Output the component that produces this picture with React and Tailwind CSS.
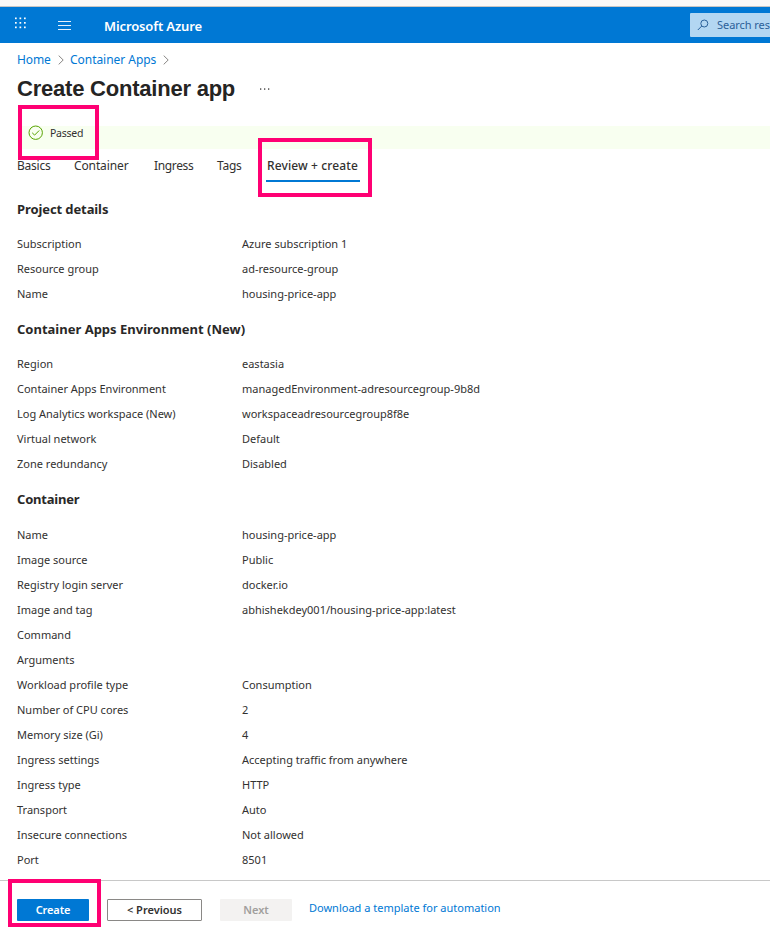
import React from "react";

const project = [
  ["Subscription", "Azure subscription 1"],
  ["Resource group", "ad-resource-group"],
  ["Name", "housing-price-app"],
];
const environment = [
  ["Region", "eastasia"],
  ["Container Apps Environment", "managedEnvironment-adresourcegroup-9b8d"],
  ["Log Analytics workspace (New)", "workspaceadresourcegroup8f8e"],
  ["Virtual network", "Default"],
  ["Zone redundancy", "Disabled"],
];
const container = [
  ["Name", "housing-price-app"],
  ["Image source", "Public"],
  ["Registry login server", "docker.io"],
  ["Image and tag", "abhishekdey001/housing-price-app:latest"],
  ["Command", ""],
  ["Arguments", ""],
  ["Workload profile type", "Consumption"],
  ["Number of CPU cores", "2"],
  ["Memory size (Gi)", "4"],
  ["Ingress settings", "Accepting traffic from anywhere"],
  ["Ingress type", "HTTP"],
  ["Transport", "Auto"],
  ["Insecure connections", "Not allowed"],
  ["Port", "8501"],
];

function Section({ title, rows, className, listClassName }) {
  return (
    <section className={className}>
      <h2 className="h-[22px] text-[13px] leading-[22px] font-bold text-[#292827]">{title}</h2>
      <dl className={listClassName}>
        {rows.map(([label, value]) => (
          <div key={label} className="flex h-[25px] items-center tracking-normal">
            <dt className="w-[225px]">{label}</dt>
            <dd>{value}</dd>
          </div>
        ))}
      </dl>
    </section>
  );
}

function Chevron() {
  return (
    <svg width="6" height="10" viewBox="0 0 6 10" fill="none" stroke="#797775" strokeWidth="0.9">
      <path d="M.7.6 5.2 5 .7 9.4" />
    </svg>
  );
}

export default function App() {
  return (
    <div className="relative flex h-[939px] w-[770px] flex-col overflow-hidden bg-white font-['Noto_Sans',sans-serif] text-[11px] leading-[16px] whitespace-nowrap text-[#323130]">
      <div className="h-[7px] shrink-0 border-b border-[#c8c6c4] bg-[#faf9f8]" />
      <header className="flex h-[36px] shrink-0 items-center bg-[#0078d4] text-white">
        <svg className="mb-[5px] ml-[15px]" width="12" height="12" viewBox="0 0 12 12" fill="currentColor">
          {[0, 4.5, 9].map((y) =>
            [0, 4.5, 9].map((x) => <rect key={`${x}-${y}`} x={x} y={y + 0.5} width="1.7" height="1.7" />)
          )}
        </svg>
        <svg className="ml-[31px]" width="13" height="10" viewBox="0 0 13 10" stroke="currentColor">
          <path d="M0 1.5h13M0 5.5h13M0 9.5h13" strokeWidth="0.9" />
        </svg>
        <span className="mt-px ml-[33px] text-[13px] font-semibold tracking-[-0.13px]">Microsoft Azure</span>
        <div className="ml-auto flex h-[24px] w-[80px] items-center overflow-hidden rounded-l-[1px] bg-[#b3d7f2] text-[#2b6199]">
          <svg className="ml-[7px] shrink-0" width="12" height="12" viewBox="0 0 12 12" fill="none" stroke="currentColor">
            <circle cx="7.3" cy="4.5" r="3.5" />
            <path d="M4.8 7 .8 11" />
          </svg>
          <span className="ml-[8px] tracking-[-0.05px]">Search res</span>
        </div>
      </header>

      <nav className="flex h-[34px] shrink-0 items-center pl-[17px] text-[12px] text-[#0078d4]">
        <span className="w-[41px] tracking-[-0.1px]">Home</span>
        <Chevron />
        <span className="ml-[6px] w-[93px] tracking-[-0.04px]">Container Apps</span>
        <Chevron />
      </nav>

      <div className="flex h-[24px] shrink-0 items-center pl-[17px]">
        <h1 className="w-[243px] font-['Liberation_Sans',sans-serif] text-[22px] leading-[24px] font-bold tracking-[-0.22px] text-[#252423]">Create Container app</h1>
        <svg width="11" height="2" viewBox="0 0 11 2" fill="#323130">
          <rect x="0" width="1.3" height="1.3" y=".4" />
          <rect x="4" width="1.3" height="1.3" y=".4" />
          <rect x="8" width="1.3" height="1.3" y=".4" />
        </svg>
      </div>

      <div className="mt-[25px] ml-[22px] flex h-[23px] shrink-0 items-start bg-[#f8fff0] pl-[6px]">
        <svg className="-mt-px" width="15" height="15" viewBox="0 0 15 15" fill="none" stroke="#57a300">
          <circle cx="7.7" cy="7.7" r="6.7" />
          <path d="m4.2 7.8 2.4 2.3 4.6-4.6" />
        </svg>
        <span className="-mt-px pl-[7px] text-[10.5px] tracking-[-0.25px]">Passed</span>
      </div>

      <div className="flex h-[33px] shrink-0 pl-[17px] text-[12px] leading-[33px] tracking-[-0.12px]">
        <span className="w-[57px] tracking-[-0.25px]">Basics</span>
        <span className="w-[80px]">Container</span>
        <span className="w-[63px] tracking-[-0.35px]">Ingress</span>
        <span className="w-[49px] tracking-[-0.25px]">Tags</span>
        <span className="w-[94px] border-b-2 border-[#0078d4] px-px font-medium tracking-[0.12px]">Review + create</span>
      </div>

      <main className="flex h-[698px] shrink-0 flex-col pl-[17px]">
        <Section className="mt-[16px] tracking-[-0.1px]" listClassName="mt-[11px]" title="Project details" rows={project} />
        <Section className="mt-[12px]" listClassName="mt-[11px]" title="Container Apps Environment (New)" rows={environment} />
        <Section className="mt-[12px] tracking-[-0.2px]" listClassName="mt-[12px]" title="Container" rows={container} />
      </main>

      <footer className="flex h-[59px] shrink-0 items-start border-t border-[#c8c8c8] pt-[18px] pl-[17px] font-semibold">
        <button className="h-[22px] w-[72px] rounded-[1px] bg-[#0078d4] tracking-[-0.1px] text-white">Create</button>
        <button className="ml-[18px] h-[22px] w-[95px] rounded-[1px] border border-[#8a8886]">&lt; Previous</button>
        <button className="ml-[18px] h-[22px] w-[72px] rounded-[1px] bg-[#f3f2f1] text-[#a19f9d]">Next</button>
        <a className="mt-px ml-[17px] font-normal text-[#0078d4]">Download a template for automation</a>
      </footer>

      <div className="absolute top-[105px] left-[18px] h-[55px] w-[81px] border-4 border-[#ff0073]" />
      <div className="absolute top-[138px] left-[258px] h-[59px] w-[114px] border-4 border-[#ff0073]" />
      <div className="absolute top-[879px] left-[8px] h-[48px] w-[93px] border-4 border-[#ff0073]" />
    </div>
  );
}
